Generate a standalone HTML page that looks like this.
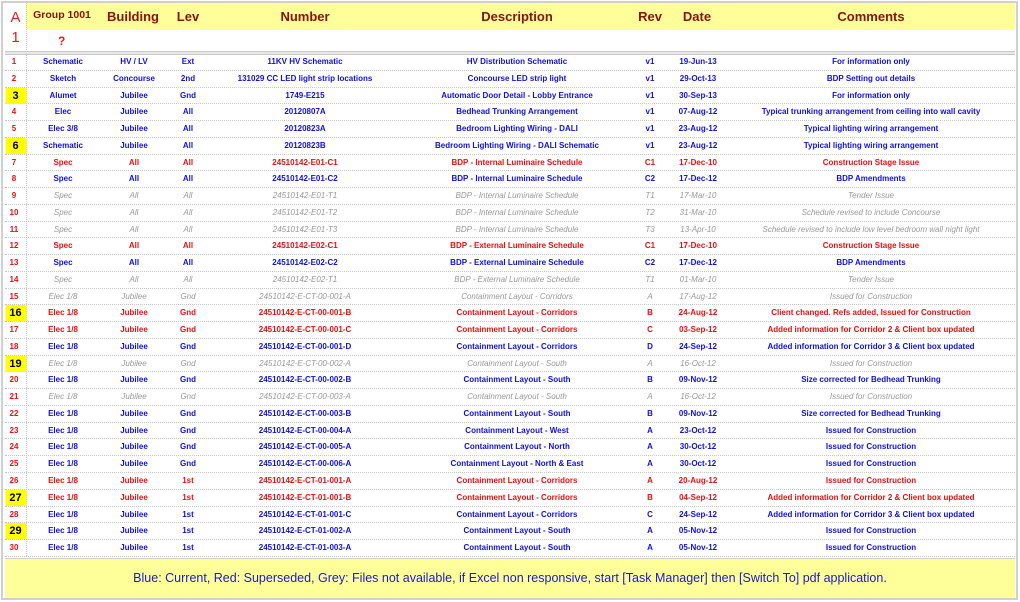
<!DOCTYPE html>
<html><head><meta charset="utf-8">
<style>
*{margin:0;padding:0;box-sizing:border-box}
body{width:1020px;height:602px;background:#fff;font-family:"Liberation Sans",Arial,sans-serif;position:relative;overflow:hidden}
.frame{position:absolute;left:1px;top:1px;width:1017px;height:599px;border:2px solid #d0d0d0}
.hdr{position:absolute;left:26px;top:3px;width:989px;height:27px;background:#ffff99}
.hdr span{position:absolute;top:6px;font-weight:bold;color:#8b1010;font-size:13px;transform:translateX(-50%);white-space:nowrap}
.aa{position:absolute;left:5px;top:3px;width:21px;height:50px;color:#e02020;font-size:15px;text-align:center;line-height:20px;padding-top:5px}
.q{position:absolute;left:58px;top:34px;color:#e02020;font-weight:bold;font-size:12px}
.sep{position:absolute;left:5px;top:51px;width:1010px;height:4px;border-top:1px solid #c8c8c8;border-bottom:1px solid #c8c8c8;background:#e8e8e8}
.vl{position:absolute;left:26px;top:3px;width:1px;height:553px;border-left:1px dotted #c8c8c8}
.row{position:absolute;left:5px;width:1010px;height:16.76px;border-bottom:1px dotted #c8c8c8;font-size:8px;font-weight:bold}
.row span{position:absolute;top:3px;transform:translateX(-50%);white-space:nowrap;line-height:10px}
.b{color:#1010e0}.r{color:#e81010}.g{color:#999;font-style:italic;font-weight:normal!important}
.n{color:#e81010!important;font-style:normal;font-weight:bold}
.y{background:#ffff00;color:#000!important;font-size:11px!important;top:0!important;height:16px;width:21px;text-align:center;line-height:16px!important;left:10.5px!important}
.foot{position:absolute;left:5px;top:558px;width:1010px;height:40px;background:#ffff99;border-top:1px solid #d0d0d0;color:#1a1ad0;font-size:12.5px;text-align:center;line-height:38px}
</style></head><body>
<div class="frame"></div>
<div class="hdr">
<span style="left:36px;font-size:10.5px">Group 1001</span>
<span style="left:107px">Building</span>
<span style="left:162px">Lev</span>
<span style="left:279px">Number</span>
<span style="left:491px">Description</span>
<span style="left:624px">Rev</span>
<span style="left:671px">Date</span>
<span style="left:845px">Comments</span>
</div>
<div class="aa">A<br>1</div>
<div class="q">?</div>
<div class="sep"></div>
<div class="vl"></div>
<div class="foot">Blue: Current, Red: Superseded, Grey: Files not available, if Excel non responsive, start [Task Manager] then [Switch To] pdf application.</div>
<div style="position:absolute;top:54px;left:0" >
<div class="row b" style="top:0px"><span class="n" style="left:9px">1</span><span style="left:58px">Schematic</span><span style="left:129px">HV / LV</span><span style="left:183px">Ext</span><span style="left:300px">11KV HV Schematic</span><span style="left:512px">HV Distribution Schematic</span><span style="left:645px">v1</span><span style="left:693px">19-Jun-13</span><span style="left:866px">For information only</span></div>
<div class="row b" style="top:16.76px"><span class="n" style="left:9px">2</span><span style="left:58px">Sketch</span><span style="left:129px">Concourse</span><span style="left:183px">2nd</span><span style="left:300px">131029 CC LED light strip locations</span><span style="left:512px">Concourse LED strip light</span><span style="left:645px">v1</span><span style="left:693px">29-Oct-13</span><span style="left:866px">BDP Setting out details</span></div>
<div class="row b" style="top:33.52px"><span class="n y">3</span><span style="left:58px">Alumet</span><span style="left:129px">Jubilee</span><span style="left:183px">Gnd</span><span style="left:300px">1749-E215</span><span style="left:512px">Automatic Door Detail - Lobby Entrance</span><span style="left:645px">v1</span><span style="left:693px">30-Sep-13</span><span style="left:866px">For information only</span></div>
<div class="row b" style="top:50.28px"><span class="n" style="left:9px">4</span><span style="left:58px">Elec</span><span style="left:129px">Jubilee</span><span style="left:183px">All</span><span style="left:300px">20120807A</span><span style="left:512px">Bedhead Trunking Arrangement</span><span style="left:645px">v1</span><span style="left:693px">07-Aug-12</span><span style="left:866px">Typical trunking arrangement from ceiling into wall cavity</span></div>
<div class="row b" style="top:67.04px"><span class="n" style="left:9px">5</span><span style="left:58px">Elec 3/8</span><span style="left:129px">Jubilee</span><span style="left:183px">All</span><span style="left:300px">20120823A</span><span style="left:512px">Bedroom Lighting Wiring - DALI</span><span style="left:645px">v1</span><span style="left:693px">23-Aug-12</span><span style="left:866px">Typical lighting wiring arrangement</span></div>
<div class="row b" style="top:83.8px"><span class="n y">6</span><span style="left:58px">Schematic</span><span style="left:129px">Jubilee</span><span style="left:183px">All</span><span style="left:300px">20120823B</span><span style="left:512px">Bedroom Lighting Wiring - DALI Schematic</span><span style="left:645px">v1</span><span style="left:693px">23-Aug-12</span><span style="left:866px">Typical lighting wiring arrangement</span></div>
<div class="row r" style="top:100.56px"><span class="n" style="left:9px">7</span><span style="left:58px">Spec</span><span style="left:129px">All</span><span style="left:183px">All</span><span style="left:300px">24510142-E01-C1</span><span style="left:512px">BDP - Internal Luminaire Schedule</span><span style="left:645px">C1</span><span style="left:693px">17-Dec-10</span><span style="left:866px">Construction Stage Issue</span></div>
<div class="row b" style="top:117.32px"><span class="n" style="left:9px">8</span><span style="left:58px">Spec</span><span style="left:129px">All</span><span style="left:183px">All</span><span style="left:300px">24510142-E01-C2</span><span style="left:512px">BDP - Internal Luminaire Schedule</span><span style="left:645px">C2</span><span style="left:693px">17-Dec-12</span><span style="left:866px">BDP Amendments</span></div>
<div class="row g" style="top:134.08px"><span class="n" style="left:9px">9</span><span style="left:58px">Spec</span><span style="left:129px">All</span><span style="left:183px">All</span><span style="left:300px">24510142-E01-T1</span><span style="left:512px">BDP - Internal Luminaire Schedule</span><span style="left:645px">T1</span><span style="left:693px">17-Mar-10</span><span style="left:866px">Tender Issue</span></div>
<div class="row g" style="top:150.84px"><span class="n" style="left:9px">10</span><span style="left:58px">Spec</span><span style="left:129px">All</span><span style="left:183px">All</span><span style="left:300px">24510142-E01-T2</span><span style="left:512px">BDP - Internal Luminaire Schedule</span><span style="left:645px">T2</span><span style="left:693px">31-Mar-10</span><span style="left:866px">Schedule revised to include Concourse</span></div>
<div class="row g" style="top:167.6px"><span class="n" style="left:9px">11</span><span style="left:58px">Spec</span><span style="left:129px">All</span><span style="left:183px">All</span><span style="left:300px">24510142-E01-T3</span><span style="left:512px">BDP - Internal Luminaire Schedule</span><span style="left:645px">T3</span><span style="left:693px">13-Apr-10</span><span style="left:866px">Schedule revised to include low level bedroom wall night light</span></div>
<div class="row r" style="top:184.36px"><span class="n" style="left:9px">12</span><span style="left:58px">Spec</span><span style="left:129px">All</span><span style="left:183px">All</span><span style="left:300px">24510142-E02-C1</span><span style="left:512px">BDP - External Luminaire Schedule</span><span style="left:645px">C1</span><span style="left:693px">17-Dec-10</span><span style="left:866px">Construction Stage Issue</span></div>
<div class="row b" style="top:201.12px"><span class="n" style="left:9px">13</span><span style="left:58px">Spec</span><span style="left:129px">All</span><span style="left:183px">All</span><span style="left:300px">24510142-E02-C2</span><span style="left:512px">BDP - External Luminaire Schedule</span><span style="left:645px">C2</span><span style="left:693px">17-Dec-12</span><span style="left:866px">BDP Amendments</span></div>
<div class="row g" style="top:217.88px"><span class="n" style="left:9px">14</span><span style="left:58px">Spec</span><span style="left:129px">All</span><span style="left:183px">All</span><span style="left:300px">24510142-E02-T1</span><span style="left:512px">BDP - External Luminaire Schedule</span><span style="left:645px">T1</span><span style="left:693px">01-Mar-10</span><span style="left:866px">Tender Issue</span></div>
<div class="row g" style="top:234.64px"><span class="n" style="left:9px">15</span><span style="left:58px">Elec 1/8</span><span style="left:129px">Jubilee</span><span style="left:183px">Gnd</span><span style="left:300px">24510142-E-CT-00-001-A</span><span style="left:512px">Containment Layout - Corridors</span><span style="left:645px">A</span><span style="left:693px">17-Aug-12</span><span style="left:866px">Issued for Construction</span></div>
<div class="row r" style="top:251.4px"><span class="n y">16</span><span style="left:58px">Elec 1/8</span><span style="left:129px">Jubilee</span><span style="left:183px">Gnd</span><span style="left:300px">24510142-E-CT-00-001-B</span><span style="left:512px">Containment Layout - Corridors</span><span style="left:645px">B</span><span style="left:693px">24-Aug-12</span><span style="left:866px">Client changed. Refs added, Issued for Construction</span></div>
<div class="row r" style="top:268.16px"><span class="n" style="left:9px">17</span><span style="left:58px">Elec 1/8</span><span style="left:129px">Jubilee</span><span style="left:183px">Gnd</span><span style="left:300px">24510142-E-CT-00-001-C</span><span style="left:512px">Containment Layout - Corridors</span><span style="left:645px">C</span><span style="left:693px">03-Sep-12</span><span style="left:866px">Added information for Corridor 2 &amp; Client box updated</span></div>
<div class="row b" style="top:284.92px"><span class="n" style="left:9px">18</span><span style="left:58px">Elec 1/8</span><span style="left:129px">Jubilee</span><span style="left:183px">Gnd</span><span style="left:300px">24510142-E-CT-00-001-D</span><span style="left:512px">Containment Layout - Corridors</span><span style="left:645px">D</span><span style="left:693px">24-Sep-12</span><span style="left:866px">Added information for Corridor 3 &amp; Client box updated</span></div>
<div class="row g" style="top:301.68px"><span class="n y">19</span><span style="left:58px">Elec 1/8</span><span style="left:129px">Jubilee</span><span style="left:183px">Gnd</span><span style="left:300px">24510142-E-CT-00-002-A</span><span style="left:512px">Containment Layout - South</span><span style="left:645px">A</span><span style="left:693px">16-Oct-12</span><span style="left:866px">Issued for Construction</span></div>
<div class="row b" style="top:318.44px"><span class="n" style="left:9px">20</span><span style="left:58px">Elec 1/8</span><span style="left:129px">Jubilee</span><span style="left:183px">Gnd</span><span style="left:300px">24510142-E-CT-00-002-B</span><span style="left:512px">Containment Layout - South</span><span style="left:645px">B</span><span style="left:693px">09-Nov-12</span><span style="left:866px">Size corrected for Bedhead Trunking</span></div>
<div class="row g" style="top:335.2px"><span class="n" style="left:9px">21</span><span style="left:58px">Elec 1/8</span><span style="left:129px">Jubilee</span><span style="left:183px">Gnd</span><span style="left:300px">24510142-E-CT-00-003-A</span><span style="left:512px">Containment Layout - South</span><span style="left:645px">A</span><span style="left:693px">16-Oct-12</span><span style="left:866px">Issued for Construction</span></div>
<div class="row b" style="top:351.96px"><span class="n" style="left:9px">22</span><span style="left:58px">Elec 1/8</span><span style="left:129px">Jubilee</span><span style="left:183px">Gnd</span><span style="left:300px">24510142-E-CT-00-003-B</span><span style="left:512px">Containment Layout - South</span><span style="left:645px">B</span><span style="left:693px">09-Nov-12</span><span style="left:866px">Size corrected for Bedhead Trunking</span></div>
<div class="row b" style="top:368.72px"><span class="n" style="left:9px">23</span><span style="left:58px">Elec 1/8</span><span style="left:129px">Jubilee</span><span style="left:183px">Gnd</span><span style="left:300px">24510142-E-CT-00-004-A</span><span style="left:512px">Containment Layout - West</span><span style="left:645px">A</span><span style="left:693px">23-Oct-12</span><span style="left:866px">Issued for Construction</span></div>
<div class="row b" style="top:385.48px"><span class="n" style="left:9px">24</span><span style="left:58px">Elec 1/8</span><span style="left:129px">Jubilee</span><span style="left:183px">Gnd</span><span style="left:300px">24510142-E-CT-00-005-A</span><span style="left:512px">Containment Layout - North</span><span style="left:645px">A</span><span style="left:693px">30-Oct-12</span><span style="left:866px">Issued for Construction</span></div>
<div class="row b" style="top:402.24px"><span class="n" style="left:9px">25</span><span style="left:58px">Elec 1/8</span><span style="left:129px">Jubilee</span><span style="left:183px">Gnd</span><span style="left:300px">24510142-E-CT-00-006-A</span><span style="left:512px">Containment Layout - North &amp; East</span><span style="left:645px">A</span><span style="left:693px">30-Oct-12</span><span style="left:866px">Issued for Construction</span></div>
<div class="row r" style="top:419px"><span class="n" style="left:9px">26</span><span style="left:58px">Elec 1/8</span><span style="left:129px">Jubilee</span><span style="left:183px">1st</span><span style="left:300px">24510142-E-CT-01-001-A</span><span style="left:512px">Containment Layout - Corridors</span><span style="left:645px">A</span><span style="left:693px">20-Aug-12</span><span style="left:866px">Issued for Construction</span></div>
<div class="row r" style="top:435.76px"><span class="n y">27</span><span style="left:58px">Elec 1/8</span><span style="left:129px">Jubilee</span><span style="left:183px">1st</span><span style="left:300px">24510142-E-CT-01-001-B</span><span style="left:512px">Containment Layout - Corridors</span><span style="left:645px">B</span><span style="left:693px">04-Sep-12</span><span style="left:866px">Added information for Corridor 2 &amp; Client box updated</span></div>
<div class="row b" style="top:452.52px"><span class="n" style="left:9px">28</span><span style="left:58px">Elec 1/8</span><span style="left:129px">Jubilee</span><span style="left:183px">1st</span><span style="left:300px">24510142-E-CT-01-001-C</span><span style="left:512px">Containment Layout - Corridors</span><span style="left:645px">C</span><span style="left:693px">24-Sep-12</span><span style="left:866px">Added information for Corridor 3 &amp; Client box updated</span></div>
<div class="row b" style="top:469.28px"><span class="n y">29</span><span style="left:58px">Elec 1/8</span><span style="left:129px">Jubilee</span><span style="left:183px">1st</span><span style="left:300px">24510142-E-CT-01-002-A</span><span style="left:512px">Containment Layout - South</span><span style="left:645px">A</span><span style="left:693px">05-Nov-12</span><span style="left:866px">Issued for Construction</span></div>
<div class="row b" style="top:486.04px"><span class="n" style="left:9px">30</span><span style="left:58px">Elec 1/8</span><span style="left:129px">Jubilee</span><span style="left:183px">1st</span><span style="left:300px">24510142-E-CT-01-003-A</span><span style="left:512px">Containment Layout - South</span><span style="left:645px">A</span><span style="left:693px">05-Nov-12</span><span style="left:866px">Issued for Construction</span></div>
</div>
</body></html>
